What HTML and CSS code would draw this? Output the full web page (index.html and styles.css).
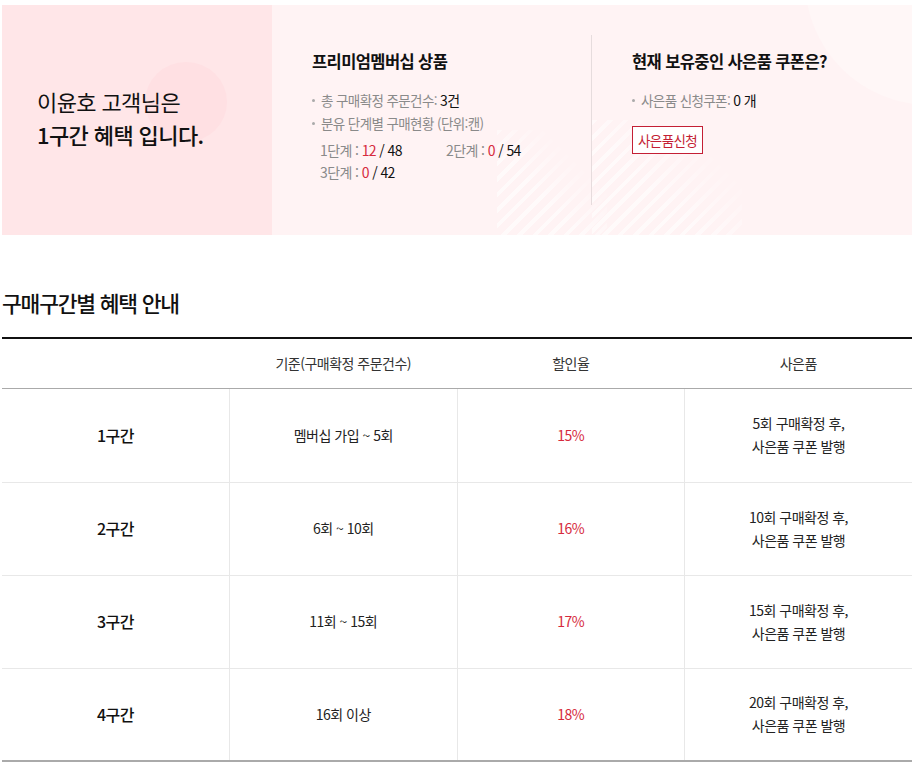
FILE: index.html
```html
<!DOCTYPE html>
<html lang="ko">
<head>
<meta charset="utf-8">
<link rel="stylesheet" href="styles.css">
</head>
<body>
<div class="page">
  <section class="summary">
    <div class="greet">
      <span class="greet-circle"></span>
      <p class="greet-text">이윤호 고객님은<br><strong>1구간 혜택 입니다.</strong></p>
    </div>
    <div class="info">
      <span class="big-circle"></span>
      <span class="stripes stripes-a"></span>
      <span class="stripes stripes-b"></span>
      <div class="col col-first">
        <h3 class="col-title">프리미엄멤버십 상품</h3>
        <ul class="bullets">
          <li>총 구매확정 주문건수: <span class="dark">3건</span></li>
          <li>분유 단계별 구매현황 (단위:캔)</li>
        </ul>
        <div class="stages">
          <span class="stage">1단계 : <span class="red">12</span> <span class="dark">/ 48</span></span>
          <span class="stage">2단계 : <span class="red">0</span> <span class="dark">/ 54</span></span>
          <span class="stage">3단계 : <span class="red">0</span> <span class="dark">/ 42</span></span>
        </div>
      </div>
      <div class="col col-second">
        <h3 class="col-title">현재 보유중인 사은품 쿠폰은?</h3>
        <ul class="bullets">
          <li>사은품 신청쿠폰: <span class="dark">0 개</span></li>
        </ul>
        <button class="apply">사은품신청</button>
      </div>
    </div>
  </section>

  <h2 class="section-title">구매구간별 혜택 안내</h2>

  <table class="benefit">
    <thead>
      <tr><th></th><th>기준(구매확정 주문건수)</th><th>할인율</th><th>사은품</th></tr>
    </thead>
    <tbody>
      <tr><td class="tier">1구간</td><td>멤버십 가입 ~ 5회</td><td class="red">15%</td><td>5회 구매확정 후,<br>사은품 쿠폰 발행</td></tr>
      <tr><td class="tier">2구간</td><td>6회 ~ 10회</td><td class="red">16%</td><td>10회 구매확정 후,<br>사은품 쿠폰 발행</td></tr>
      <tr><td class="tier">3구간</td><td>11회 ~ 15회</td><td class="red">17%</td><td>15회 구매확정 후,<br>사은품 쿠폰 발행</td></tr>
      <tr><td class="tier">4구간</td><td>16회 이상</td><td class="red">18%</td><td>20회 구매확정 후,<br>사은품 쿠폰 발행</td></tr>
    </tbody>
  </table>
</div>
</body>
</html>
```

FILE: styles.css
```css
* { box-sizing: border-box; }
html, body { margin: 0; padding: 0; background: #fff; }
body {
  font-family: "Noto Sans CJK KR", "Noto Sans", sans-serif;
  color: #222;
  font-size: 14px;
}
.page { padding: 5px 8px 0 2px; width: 920px; }

.summary {
  display: flex;
  height: 230px;
  width: 910px;
}
.greet {
  position: relative;
  width: 270px;
  background: #ffe6e8;
  display: flex;
  align-items: center;
  padding-left: 35px;
  overflow: hidden;
}
.greet-circle {
  position: absolute;
  left: 143px;
  top: 57px;
  width: 82px;
  height: 80px;
  border-radius: 50%;
  background: #ffe0e3;
}
.greet-text {
  position: relative;
  margin: 0 0 4px;
  font-size: 22px;
  line-height: 33px;
  letter-spacing: -0.6px;
  color: #111;
  font-weight: 400;
}
.greet-text strong { font-weight: 500; }

.info {
  position: relative;
  flex: 1;
  background: #fff3f4;
  display: flex;
  padding: 30px 0;
  overflow: hidden;
}
.big-circle {
  position: absolute;
  left: 533px;
  top: -150px;
  width: 250px;
  height: 250px;
  border-radius: 50%;
  background: #fff7f7;
}
.stripes {
  position: absolute;
  background: repeating-linear-gradient(135deg, rgba(255,255,255,0.55) 0 4px, transparent 4px 11px);
}
.stripes-a { left: 225px; top: 125px; width: 110px; height: 105px;
  -webkit-mask-image: linear-gradient(45deg, #000 40%, transparent 75%); mask-image: linear-gradient(45deg, #000 40%, transparent 75%); }
.stripes-b { left: 320px; top: 115px; width: 150px; height: 115px;
  -webkit-mask-image: linear-gradient(225deg, transparent 20%, #000 60%); mask-image: linear-gradient(225deg, transparent 20%, #000 60%); }

.col { position: relative; padding: 14px 0 0 40px; }
.col-first { width: 320px; border-right: 1px solid #e6dcdd; }
.col-second { flex: 1; }
.col-title {
  margin: 0;
  font-size: 16.5px;
  line-height: 24px;
  font-weight: 700;
  letter-spacing: -0.6px;
  color: #111;
}
.bullets { list-style: none; margin: 16px 0 0; padding: 0; }
.bullets li {
  position: relative;
  padding-left: 9px;
  font-size: 13.5px;
  line-height: 23px;
  color: #8a8a8a;
  letter-spacing: -0.6px;
}
.bullets li::before {
  content: "";
  position: absolute;
  left: 0;
  top: 10px;
  width: 3px;
  height: 3px;
  border-radius: 50%;
  background: #aaa;
}
.bullets .dark { font-size: 14px; }
.dark { color: #111; }
.red { color: #d62a3d; }
.stages {
  display: grid;
  grid-template-columns: 126px auto;
  margin: 4px 0 0 8px;
}
.stage {
  font-size: 14px;
  line-height: 22px;
  color: #8a8a8a;
  letter-spacing: -0.6px;
}
.apply {
  margin-top: 14px;
  height: 28px;
  padding: 0 5px;
  border: 1px solid #c41f35;
  background: #fff;
  color: #c41f35;
  font-family: inherit;
  font-size: 13.5px;
  letter-spacing: -0.6px;
  line-height: 25px;
}

.section-title {
  margin: 52px 0 0;
  font-size: 21.5px;
  line-height: 32px;
  font-weight: 500;
  letter-spacing: -1.2px;
  color: #111;
}

.benefit {
  margin-top: 18px;
  width: 910px;
  border-collapse: collapse;
  table-layout: fixed;
  border-top: 2px solid #111;
  border-bottom: 2px solid #aaa;
}
.benefit th {
  height: 50px;
  font-weight: 400;
  font-size: 14px;
  color: #333;
  letter-spacing: -0.5px;
  border-bottom: 1px solid #aaa;
}
.benefit td {
  height: 93px;
  text-align: center;
  font-size: 14px;
  line-height: 23px;
  color: #222;
  letter-spacing: -0.5px;
  border-left: 1px solid #e8e8e8;
  border-bottom: 1px solid #e8e8e8;
}
.benefit tbody tr:first-child td { height: 94px; }
.benefit td:first-child { border-left: none; }
.benefit td.tier { font-size: 16px; font-weight: 500; color: #111; }
.benefit td.red { color: #d62a3d; }
```
